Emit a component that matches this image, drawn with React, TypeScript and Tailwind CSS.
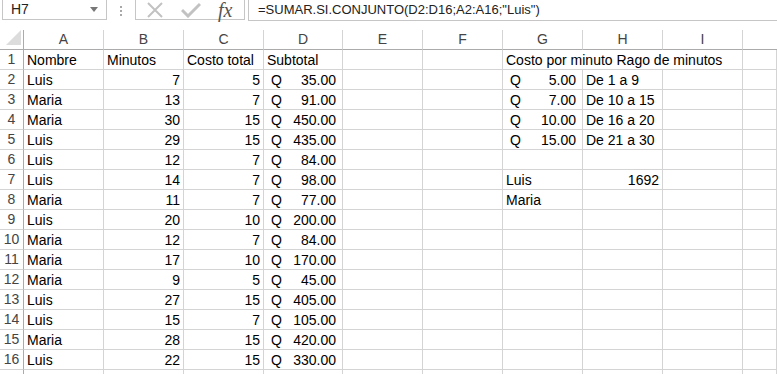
const cols = ["A", "B", "C", "D", "E", "F", "G", "H", "I", ""];

type Cell = { t?: string; align?: "l" | "r"; q?: string; span?: number };

const data: [string, number, number, string][] = [
  ["Luis", 7, 5, "35.00"],
  ["Maria", 13, 7, "91.00"],
  ["Maria", 30, 15, "450.00"],
  ["Luis", 29, 15, "435.00"],
  ["Luis", 12, 7, "84.00"],
  ["Luis", 14, 7, "98.00"],
  ["Maria", 11, 7, "77.00"],
  ["Luis", 20, 10, "200.00"],
  ["Maria", 12, 7, "84.00"],
  ["Maria", 17, 10, "170.00"],
  ["Maria", 9, 5, "45.00"],
  ["Luis", 27, 15, "405.00"],
  ["Luis", 15, 7, "105.00"],
  ["Maria", 28, 15, "420.00"],
  ["Luis", 22, 15, "330.00"],
];

const side: Record<number, Cell[]> = {
  2: [{ q: "5.00" }, { t: "De 1 a 9" }],
  3: [{ q: "7.00" }, { t: "De 10 a 15" }],
  4: [{ q: "10.00" }, { t: "De 16 a 20" }],
  5: [{ q: "15.00" }, { t: "De 21 a 30" }],
  7: [{ t: "Luis" }, { t: "1692", align: "r" }],
  8: [{ t: "Maria" }, {}],
};

function buildRows(): Cell[][] {
  const rows: Cell[][] = [];
  rows.push([
    { t: "Nombre" },
    { t: "Minutos" },
    { t: "Costo total" },
    { t: "Subtotal" },
    {},
    {},
    { t: "Costo por minuto Rago de minutos", span: 3 },
    {},
  ]);
  data.forEach((d, i) => {
    const r = i + 2;
    const g = side[r] ?? [{}, {}];
    rows.push([
      { t: d[0] },
      { t: String(d[1]), align: "r" },
      { t: String(d[2]), align: "r" },
      { q: d[3] },
      {},
      {},
      g[0],
      g[1],
      {},
      {},
    ]);
  });
  rows.push([{}, {}, {}, {}, {}, {}, {}, {}, {}, {}]);
  return rows;
}

function CellView({ c }: { c: Cell }) {
  const span =
    c.span === 3 ? "col-span-3" : c.span === 2 ? "col-span-2" : "";
  return (
    <div
      className={`h-[20px] border-r border-b border-[#d4d4d4] flex items-end overflow-visible whitespace-nowrap text-[14px] leading-[18px] text-[#000] ${span}`}
    >
      {c.q ? (
        <div className="flex w-full justify-between pl-[7px] pr-[6px]">
          <span>Q</span>
          <span>{c.q}</span>
        </div>
      ) : c.t ? (
        <div
          className={`w-full px-[3px] ${c.align === "r" ? "text-right" : "text-left"}`}
        >
          {c.t}
        </div>
      ) : null}
    </div>
  );
}

export default function App() {
  const rows = buildRows();
  return (
    <div
      className="w-[777px] h-[374px] overflow-hidden bg-white"
      style={{ fontFamily: '"Liberation Sans", Arial, sans-serif' }}
    >
      {/* barra de fórmulas */}
      <div className="flex h-[21px] items-stretch">
        <div className="ml-[2px] w-[105px] h-[20px] border-x border-b border-[#c6c6c6] flex items-center justify-between pl-[8px] pr-[8px] text-[14px] text-[#222]">
          <span>H7</span>
          <svg width="8" height="5" viewBox="0 0 8 5">
            <path d="M0 0 L8 0 L4 5 Z" fill="#777" />
          </svg>
        </div>
        <div className="w-[28px] flex flex-col items-center justify-center gap-[2px]">
          <span className="w-[2px] h-[2px] bg-[#a8a8a8]" />
          <span className="w-[2px] h-[2px] bg-[#a8a8a8]" />
          <span className="w-[2px] h-[2px] bg-[#a8a8a8]" />
        </div>
        <div className="w-[110px] h-[20px] border-x border-b border-[#c6c6c6] flex items-center pl-[10px] gap-[17px]">
          <svg width="18" height="16" viewBox="0 0 18 16">
            <path d="M2 1 L16 15 M16 1 L2 15" stroke="#c2c2c2" strokeWidth="2" fill="none" />
          </svg>
          <svg width="20" height="16" viewBox="0 0 20 16">
            <path d="M1 8 L7 14 L19 2" stroke="#c2c2c2" strokeWidth="3" fill="none" />
          </svg>
          <span
            className="italic text-[20px] leading-[20px] text-[#555]"
            style={{ fontFamily: '"Liberation Serif", serif' }}
          >
            fx
          </span>
        </div>
        <div className="flex-1 ml-[3px] border-l border-b border-[#c6c6c6] flex items-center pl-[9px] text-[13px] text-[#222] whitespace-nowrap">
          =SUMAR.SI.CONJUNTO(D2:D16;A2:A16;"Luis")
        </div>
      </div>

      <div className="h-[9px]" />

      {/* hoja */}
      <div className="grid grid-cols-[24px_80px_80px_80px_79px_80px_80px_80px_80px_80px_34px]">
        <div className="h-[20px] border-r border-b border-[#ababab] flex items-end justify-end pr-[2px] pb-[4px]">
          <svg width="15" height="15" viewBox="0 0 15 15">
            <path d="M15 0 L15 15 L0 15 Z" fill="#dcdcdc" />
          </svg>
        </div>
        {cols.map((c, i) => (
          <div
            key={i}
            className={`h-[20px] border-b border-[#ababab] flex items-center justify-center text-[14px] text-[#444] ${i < 9 ? "border-r border-r-[#d4d4d4]" : ""}`}
          >
            {c}
          </div>
        ))}
        {rows.map((r, ri) => (
          <Row key={ri} n={ri < 16 ? String(ri + 1) : ""} cells={r} />
        ))}
      </div>
    </div>
  );
}

function Row({ n, cells }: { n: string; cells: Cell[] }) {
  return (
    <>
      <div className="h-[20px] border-r border-r-[#ababab] border-b border-b-[#d4d4d4] flex items-center justify-center text-[14px] text-[#444]">
        {n}
      </div>
      {cells.map((c, i) => (
        <CellView key={i} c={c} />
      ))}
    </>
  );
}
